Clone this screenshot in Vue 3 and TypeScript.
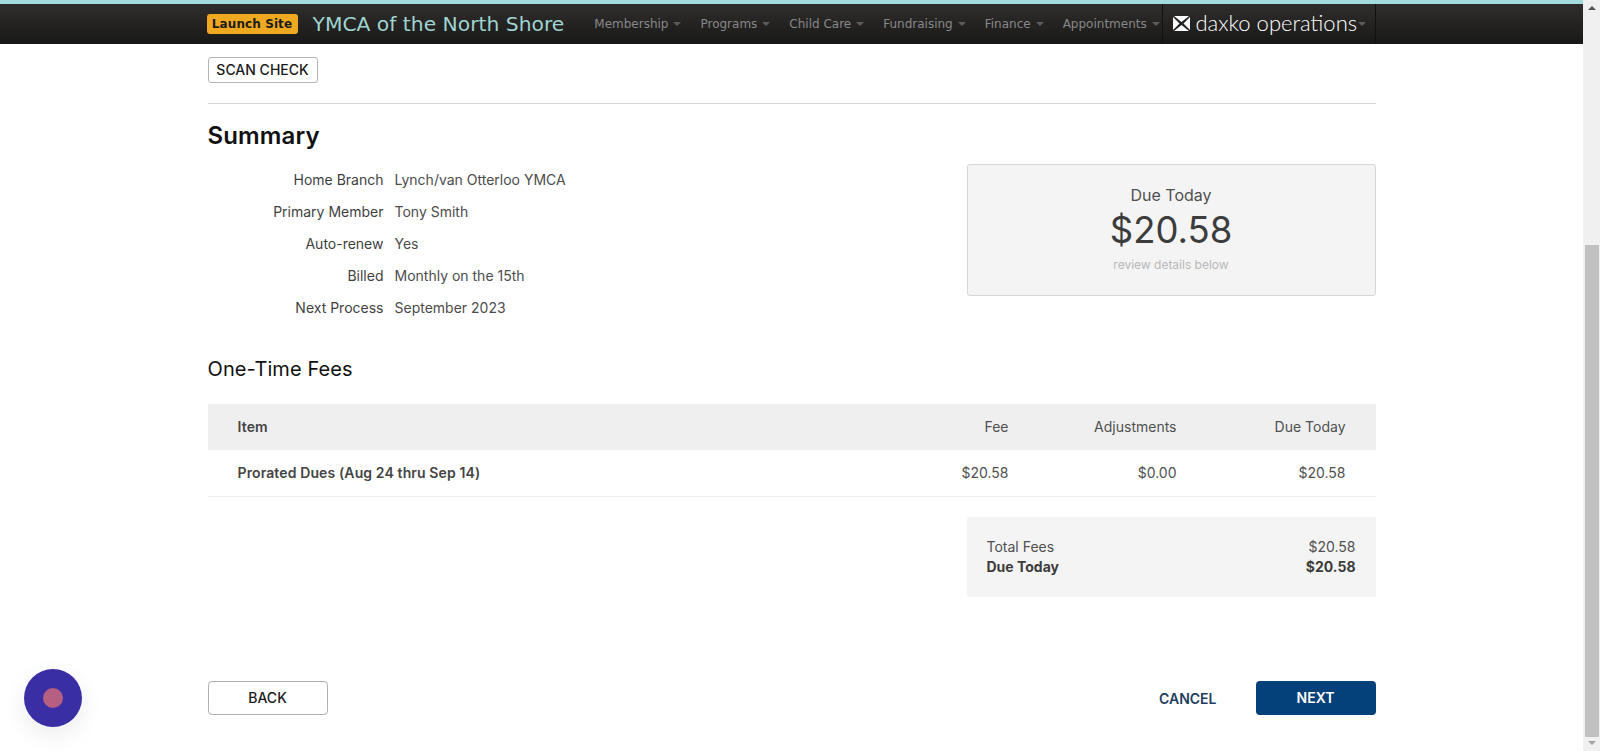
<script setup lang="ts">
const navItems = ['Membership', 'Programs', 'Child Care', 'Fundraising', 'Finance', 'Appointments'];

const details = [
  { label: 'Home Branch', value: 'Lynch/van Otterloo YMCA' },
  { label: 'Primary Member', value: 'Tony Smith' },
  { label: 'Auto-renew', value: 'Yes' },
  { label: 'Billed', value: 'Monthly on the 15th' },
  { label: 'Next Process', value: 'September 2023' },
];
</script>

<template>
  <div class="page">
    <div class="viewport">
      <header class="topbar">
        <div class="topbarInner">
          <span class="badge">Launch Site</span>
          <span class="siteName">YMCA of the North Shore</span>
          <nav class="nav">
            <a v-for="item in navItems" :key="item" class="navItem">
              {{ item }}<i class="caret"></i>
            </a>
          </nav>
          <div class="brand">
            <svg class="brandMark" viewBox="0 0 17 15" width="17" height="15">
              <path d="M1 0H16L8.5 6ZM1 15H16L8.5 9ZM0 1V14L6.5 7.5ZM17 1V14L10.5 7.5Z" fill="#fff" />
            </svg>
            <span class="brandName">daxko operations</span><i class="caret"></i>
          </div>
        </div>
      </header>

      <main class="content">
        <button type="button" class="scanButton">SCAN CHECK</button>
        <hr class="divider" />

        <h1 class="title">Summary</h1>
        <section class="summary">
          <dl class="details">
            <div v-for="row in details" :key="row.label" class="detailRow">
              <dt>{{ row.label }}</dt>
              <dd>{{ row.value }}</dd>
            </div>
          </dl>
          <div class="dueCard">
            <div class="dueLabel">Due Today</div>
            <div class="dueAmount">$20.58</div>
            <div class="dueHint">review details below</div>
          </div>
        </section>

        <h2 class="subtitle">One-Time Fees</h2>
        <div class="feeTable">
          <div class="feeRow feeHead">
            <strong>Item</strong>
            <span>Fee</span>
            <span>Adjustments</span>
            <span>Due Today</span>
          </div>
          <div class="feeRow">
            <strong>Prorated Dues (Aug 24 thru Sep 14)</strong>
            <span>$20.58</span>
            <span>$0.00</span>
            <span>$20.58</span>
          </div>
        </div>

        <div class="totals">
          <div class="totalRow">
            <span>Total Fees</span>
            <span>$20.58</span>
          </div>
          <div class="totalRow totalStrong">
            <span>Due Today</span>
            <span>$20.58</span>
          </div>
        </div>

        <footer class="actions">
          <button type="button" class="actionButton back">BACK</button>
          <div class="actionsRight">
            <button type="button" class="cancel">CANCEL</button>
            <button type="button" class="actionButton next">NEXT</button>
          </div>
        </footer>
      </main>
    </div>

    <div class="scrollbar">
      <i class="arrow up"></i>
      <div class="thumb"></div>
      <i class="arrow down"></i>
    </div>

    <div class="chatBubble"><span></span></div>
  </div>
</template>

<style scoped>
.page {
  display: flex;
  height: 100vh;
  overflow: hidden;
  background: #fff;
  color: #444;
  font-family: Inter, "Liberation Sans", sans-serif;
  font-size: 14px;
}

.viewport {
  flex: 1;
  min-width: 0;
}

.topbar {
  height: 44px;
  box-sizing: border-box;
  border-top: 4px solid #a3dcdc;
  background: linear-gradient(#302e2c, #181818);
}

.topbarInner {
  display: flex;
  align-items: center;
  width: 1168px;
  height: 100%;
  margin: 0 auto;
  font-family: "DejaVu Sans", sans-serif;
}

.badge {
  width: 91px;
  height: 20px;
  margin-left: -1px;
  border-radius: 3px;
  background: #eea921;
  color: #1c1c1c;
  font-size: 12px;
  font-weight: 700;
  line-height: 20px;
  letter-spacing: 0.1px;
  text-align: center;
}

.siteName {
  margin-left: 15px;
  color: #9fd4d2;
  font-size: 20.3px;
  white-space: nowrap;
}

.nav {
  display: flex;
  gap: 19px;
  margin-left: 30px;
}

.navItem {
  display: flex;
  align-items: center;
  color: #888;
  font-size: 12px;
  white-space: nowrap;
}

.caret {
  width: 0;
  height: 0;
  margin-left: 5px;
  border-top: 4px solid #5c5c5c;
  border-right: 4px solid transparent;
  border-left: 4px solid transparent;
}

.brand {
  display: flex;
  align-items: center;
  align-self: stretch;
  box-sizing: border-box;
  width: 214px;
  margin-left: auto;
  padding-left: 10px;
  border-right: 1px solid #111;
  border-left: 1px solid #111;
}

.brandMark {
  flex: none;
  margin-top: -2px;
}

.brandName {
  margin-top: -4px;
  margin-left: 6px;
  color: #fff;
  font-family: Lato, sans-serif;
  font-size: 22px;
  font-weight: 300;
  white-space: nowrap;
}

.brand .caret {
  margin-left: 1px;
}

.content {
  width: 1168px;
  margin: 0 auto;
}

.scanButton {
  display: block;
  width: 110px;
  height: 26px;
  margin-top: 13px;
  padding: 0 0 2px;
  border: 1px solid #b4b4b4;
  border-radius: 3px;
  background: #fff;
  color: #1a1a1a;
  font: 500 14px Inter, sans-serif;
}

.divider {
  height: 1px;
  margin: 20px 0 0;
  border: 0;
  background: #d4d4d4;
}

.title {
  margin: 17px 0 14px;
  color: #111;
  font-size: 24px;
  font-weight: 600;
  line-height: 29px;
  letter-spacing: 0.15px;
}

.summary {
  display: flex;
  justify-content: space-between;
  align-items: flex-start;
}

.details {
  margin: 0;
}

.detailRow {
  display: flex;
  gap: 11px;
  box-sizing: border-box;
  height: 32px;
  padding-bottom: 2px;
  align-items: center;
}

.detailRow dt {
  width: 176px;
  color: #3f3f3f;
  text-align: right;
}

.detailRow dd {
  margin: 0;
  color: #4c4c4c;
}

.dueCard {
  box-sizing: border-box;
  width: 409px;
  height: 132px;
  padding-top: 20px;
  border: 1px solid #d6d6d6;
  border-radius: 3px;
  background: #f4f4f4;
  text-align: center;
}

.dueLabel {
  color: #505050;
  font-size: 16px;
  line-height: 20px;
}

.dueAmount {
  margin-top: 2px;
  color: #3c3c3c;
  font-size: 36.5px;
  line-height: 46px;
}

.dueHint {
  margin-top: 4px;
  color: #b8b8b8;
  font-size: 12px;
  line-height: 15px;
}

.subtitle {
  margin: 33px 0 23px;
  color: #111;
  font-size: 20px;
  font-weight: 400;
  line-height: 24px;
  letter-spacing: 0.1px;
}

.feeRow {
  display: grid;
  grid-template-columns: 1fr 168px 168px 169px;
  align-items: center;
  height: 47px;
  padding: 0 30px 2px;
  box-sizing: border-box;
  border-bottom: 1px solid #eee;
  color: #505050;
}

.feeRow span {
  text-align: right;
}

.feeRow strong {
  color: #444;
  font-weight: 600;
  letter-spacing: 0.12px;
}

.feeHead {
  height: 46px;
  border-bottom: 0;
  border-radius: 2px 2px 0 0;
  background: #efefef;
}

.totals {
  box-sizing: border-box;
  width: 409px;
  height: 80px;
  margin: 20px 0 0 auto;
  padding: 20px;
  border-radius: 2px;
  background: #f4f4f4;
  color: #505050;
}

.totalRow {
  display: flex;
  justify-content: space-between;
  line-height: 20px;
}

.totalStrong {
  color: #3c3c3c;
  font-weight: 700;
}

.actions {
  display: flex;
  justify-content: space-between;
  margin-top: 84px;
}

.actionsRight {
  display: flex;
  align-items: center;
  gap: 39px;
}

.actionButton {
  width: 120px;
  height: 34px;
  padding: 0 0 2px;
  border-radius: 4px;
  font: 600 14px Inter, sans-serif;
}

.back {
  border: 1px solid #b0b0b0;
  background: #fff;
  color: #1a1a1a;
  font-weight: 500;
}

.next {
  border: 0;
  background: #04417a;
  color: #fff;
}

.cancel {
  padding: 0;
  border: 0;
  background: none;
  color: #1f3d5c;
  font: 600 14px Inter, sans-serif;
}

.scrollbar {
  display: flex;
  flex-direction: column;
  align-items: center;
  width: 17px;
  background: #f0f0f0;
}

.thumb {
  flex: 1;
  width: 14px;
  margin: 235px 0 4px;
  background: #c1c1c1;
}

.arrow {
  width: 0;
  height: 0;
  border-right: 4px solid transparent;
  border-left: 4px solid transparent;
}

.arrow.up {
  margin-top: 6px;
  border-bottom: 4px solid #505050;
}

.arrow.down {
  margin-bottom: 6px;
  border-top: 4px solid #a3a3a3;
}

.chatBubble {
  position: fixed;
  left: 24px;
  top: 669px;
  display: flex;
  align-items: center;
  justify-content: center;
  width: 58px;
  height: 58px;
  border-radius: 50%;
  background: #392ea3;
  box-shadow: 0 8px 24px rgba(0, 0, 0, 0.08);
}

.chatBubble span {
  width: 20px;
  height: 20px;
  border-radius: 50%;
  background: #b75f83;
}
</style>

<style>
html,
body {
  margin: 0;
  overflow: hidden;
}
</style>
